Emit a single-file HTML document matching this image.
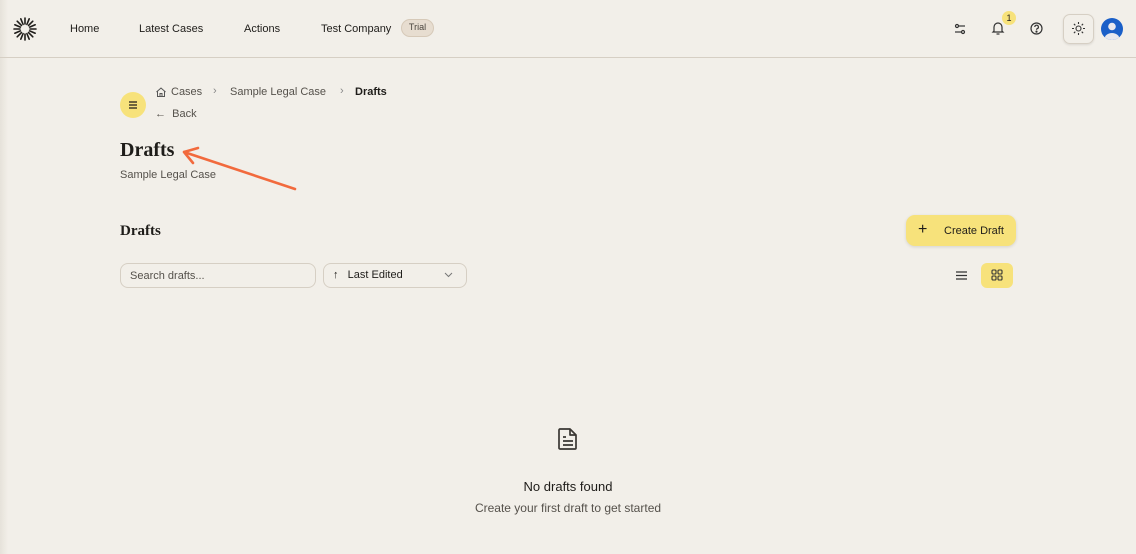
<!DOCTYPE html>
<html><head><meta charset="utf-8"><style>
*{box-sizing:border-box;margin:0;padding:0}
body{width:1136px;height:554px;background:#f2efe9;font-family:"Liberation Sans",sans-serif;color:#1f1d1a;position:relative;overflow:hidden;font-size:11px}
.a{position:absolute}
.nav{left:0;top:0;width:1136px;height:58px;border-bottom:1px solid #d6cfc4}
.nav span.t{position:absolute;top:23px;font-size:11px;color:#1f1d1a}
.serif{font-family:"Liberation Serif",serif;font-weight:bold}
.muted{color:#55514b}
</style></head><body>
<div class="a" style="left:0;top:0;width:8px;height:554px;background:linear-gradient(90deg,#e6e2da,#f2efe9)"></div>
<div class="a nav">
<svg class="a" style="left:12px;top:16px" width="26" height="26" viewBox="-13 -13 26 26" stroke="#1f1d1a" stroke-width="1.6" stroke-linecap="round">
<g id="r"><line x1="0" y1="-5" x2="0" y2="-11"/></g>
<use href="#r" transform="rotate(22.5)"/><use href="#r" transform="rotate(45)"/><use href="#r" transform="rotate(67.5)"/><use href="#r" transform="rotate(90)"/><use href="#r" transform="rotate(112.5)"/><use href="#r" transform="rotate(135)"/><use href="#r" transform="rotate(157.5)"/><use href="#r" transform="rotate(180)"/><use href="#r" transform="rotate(202.5)"/><use href="#r" transform="rotate(225)"/><use href="#r" transform="rotate(247.5)"/><use href="#r" transform="rotate(270)"/><use href="#r" transform="rotate(292.5)"/><use href="#r" transform="rotate(315)"/><use href="#r" transform="rotate(337.5)"/>
</svg>
<span class="t" style="left:70px">Home</span>
<span class="t" style="left:139px">Latest Cases</span>
<span class="t" style="left:244px">Actions</span>
<span class="t" style="left:321px">Test Company</span>
<span class="a" style="left:401px;top:19px;width:33px;height:18px;border-radius:9px;background:#e7ddd0;border:1px solid #d6c9b8;font-size:9px;color:#4a453e;text-align:center;line-height:15px">Trial</span>
<svg class="a" style="left:953px;top:22px" width="14" height="14" viewBox="0 0 14 14" fill="none" stroke="#333" stroke-width="1.2"><line x1="2" y1="4" x2="12" y2="4"/><circle cx="4" cy="4" r="1.5" fill="#f2efe9"/><line x1="2" y1="10" x2="12" y2="10"/><circle cx="10" cy="10" r="1.5" fill="#f2efe9"/></svg>
<svg class="a" style="left:991px;top:21px" width="14" height="15" viewBox="0 0 14 15" fill="none" stroke="#333" stroke-width="1.2"><path d="M3 10V6a4 4 0 0 1 8 0v4l1 1H2z"/><path d="M5.5 13h3"/></svg>
<div class="a" style="left:1002px;top:11px;width:14px;height:14px;border-radius:7px;background:#f7e27b;font-size:9px;text-align:center;line-height:14px">1</div>
<svg class="a" style="left:1029px;top:21px" width="15" height="15" viewBox="0 0 15 15" fill="none" stroke="#333" stroke-width="1.2"><circle cx="7.5" cy="7.5" r="5.5"/><path d="M5.8 6a1.8 1.8 0 1 1 2.4 1.7c-.5.2-.7.6-.7 1.1"/><circle cx="7.5" cy="10.6" r=".5" fill="#333"/></svg>
<div class="a" style="left:1063px;top:14px;width:31px;height:30px;border-radius:7px;border:1px solid #d6cfc4;box-shadow:0 1px 2px rgba(0,0,0,.1)"></div>
<svg class="a" style="left:1071px;top:21px" width="15" height="15" viewBox="0 0 15 15" fill="none" stroke="#333" stroke-width="1.1"><circle cx="7.5" cy="7.5" r="2.5"/><path d="M7.5 1v2M7.5 12v2M1 7.5h2M12 7.5h2M2.9 2.9l1.4 1.4M10.7 10.7l1.4 1.4M2.9 12.1l1.4-1.4M10.7 4.3l1.4-1.4"/></svg>
<svg class="a" style="left:1101px;top:18px" width="22" height="22" viewBox="0 0 22 22"><defs><clipPath id="c"><circle cx="11" cy="11" r="11"/></clipPath></defs><circle cx="11" cy="11" r="11" fill="#1a5fc8"/><g clip-path="url(#c)" fill="#e8e8ee"><circle cx="11" cy="8.5" r="3.8"/><ellipse cx="11" cy="21" rx="7.5" ry="6"/></g></svg>
</div>
<div class="a" style="left:120px;top:92px;width:26px;height:26px;border-radius:13px;background:#f7e27b"></div>
<svg class="a" style="left:127px;top:99px" width="12" height="12" viewBox="0 0 12 12" stroke="#1f1d1a" stroke-width="1.3"><path d="M2 3h8M2 6h8M2 9h8"/></svg>
<svg class="a" style="left:155px;top:86px" width="12" height="12" viewBox="0 0 12 12" fill="none" stroke="#555" stroke-width="1"><path d="M1.5 6L6 2l4.5 4M2.5 5.2V10.5h7V5.2M5 10.5V7.5h2v3"/></svg>
<span class="a muted" style="left:171px;top:86px">Cases</span>
<span class="a" style="left:213px;top:85px;color:#888">›</span>
<span class="a muted" style="left:230px;top:86px">Sample Legal Case</span>
<span class="a" style="left:340px;top:85px;color:#888">›</span>
<span class="a" style="left:355px;top:86px;font-weight:bold">Drafts</span>
<span class="a muted" style="left:155px;top:108px">←&nbsp; Back</span>
<div class="a serif" style="left:120px;top:139px;font-size:20px">Drafts</div>
<span class="a muted" style="left:120px;top:169px">Sample Legal Case</span>
<svg class="a" style="left:180px;top:142px" width="120" height="52" viewBox="0 0 120 52" fill="none" stroke="#f26a3d" stroke-width="2.6" stroke-linecap="round" stroke-linejoin="round"><path d="M115 47L4 10M4 10l14-4M4 10l9 11"/></svg>
<div class="a serif" style="left:120px;top:223px;font-size:15px">Drafts</div>
<div class="a" style="left:906px;top:215px;width:110px;height:31px;border-radius:9px;background:#f7e27b;box-shadow:0 1px 3px rgba(0,0,0,.12)"></div>
<span class="a" style="left:918px;top:221px;font-size:16px">+</span>
<span class="a" style="left:944px;top:225px;font-size:11px">Create Draft</span>
<div class="a" style="left:120px;top:263px;width:196px;height:25px;border-radius:8px;border:1px solid #d6cfc4"></div>
<span class="a muted" style="left:130px;top:270px">Search drafts...</span>
<div class="a" style="left:323px;top:263px;width:144px;height:25px;border-radius:8px;border:1px solid #d6cfc4"></div>
<span class="a" style="left:333px;top:269px">↑&nbsp;&nbsp; Last Edited</span>
<svg class="a" style="left:444px;top:272px" width="9" height="6" viewBox="0 0 9 6" fill="none" stroke="#777"><path d="M1 1l3.5 3.5L8 1"/></svg>
<svg class="a" style="left:955px;top:270px" width="13" height="11" viewBox="0 0 13 11" stroke="#333" stroke-width="1.2"><path d="M1 2h11M1 5.5h11M1 9h11"/></svg>
<div class="a" style="left:981px;top:263px;width:32px;height:25px;border-radius:6px;background:#f7e27b"></div>
<svg class="a" style="left:991px;top:269px" width="12" height="12" viewBox="0 0 12 12" fill="none" stroke="#333" stroke-width="1.1"><rect x="1" y="1" width="4" height="4" rx="1"/><rect x="7" y="1" width="4" height="4" rx="1"/><rect x="1" y="7" width="4" height="4" rx="1"/><rect x="7" y="7" width="4" height="4" rx="1"/></svg>
<svg class="a" style="left:557px;top:427px" width="22" height="24" viewBox="0 0 22 24" fill="none" stroke="#3a3733" stroke-width="1.7" stroke-linejoin="round"><path d="M3 2h10l6 6v13a1 1 0 0 1-1 1H3a1 1 0 0 1-1-1V3a1 1 0 0 1 1-1z"/><path d="M13 2v6h6M6 10h3M6 14h10M6 18h10"/></svg>
<div class="a" style="left:0;width:1136px;top:479px;text-align:center;font-size:13px">No drafts found</div>
<div class="a muted" style="left:0;width:1136px;top:501px;text-align:center;font-size:12px">Create your first draft to get started</div>
</body></html>
